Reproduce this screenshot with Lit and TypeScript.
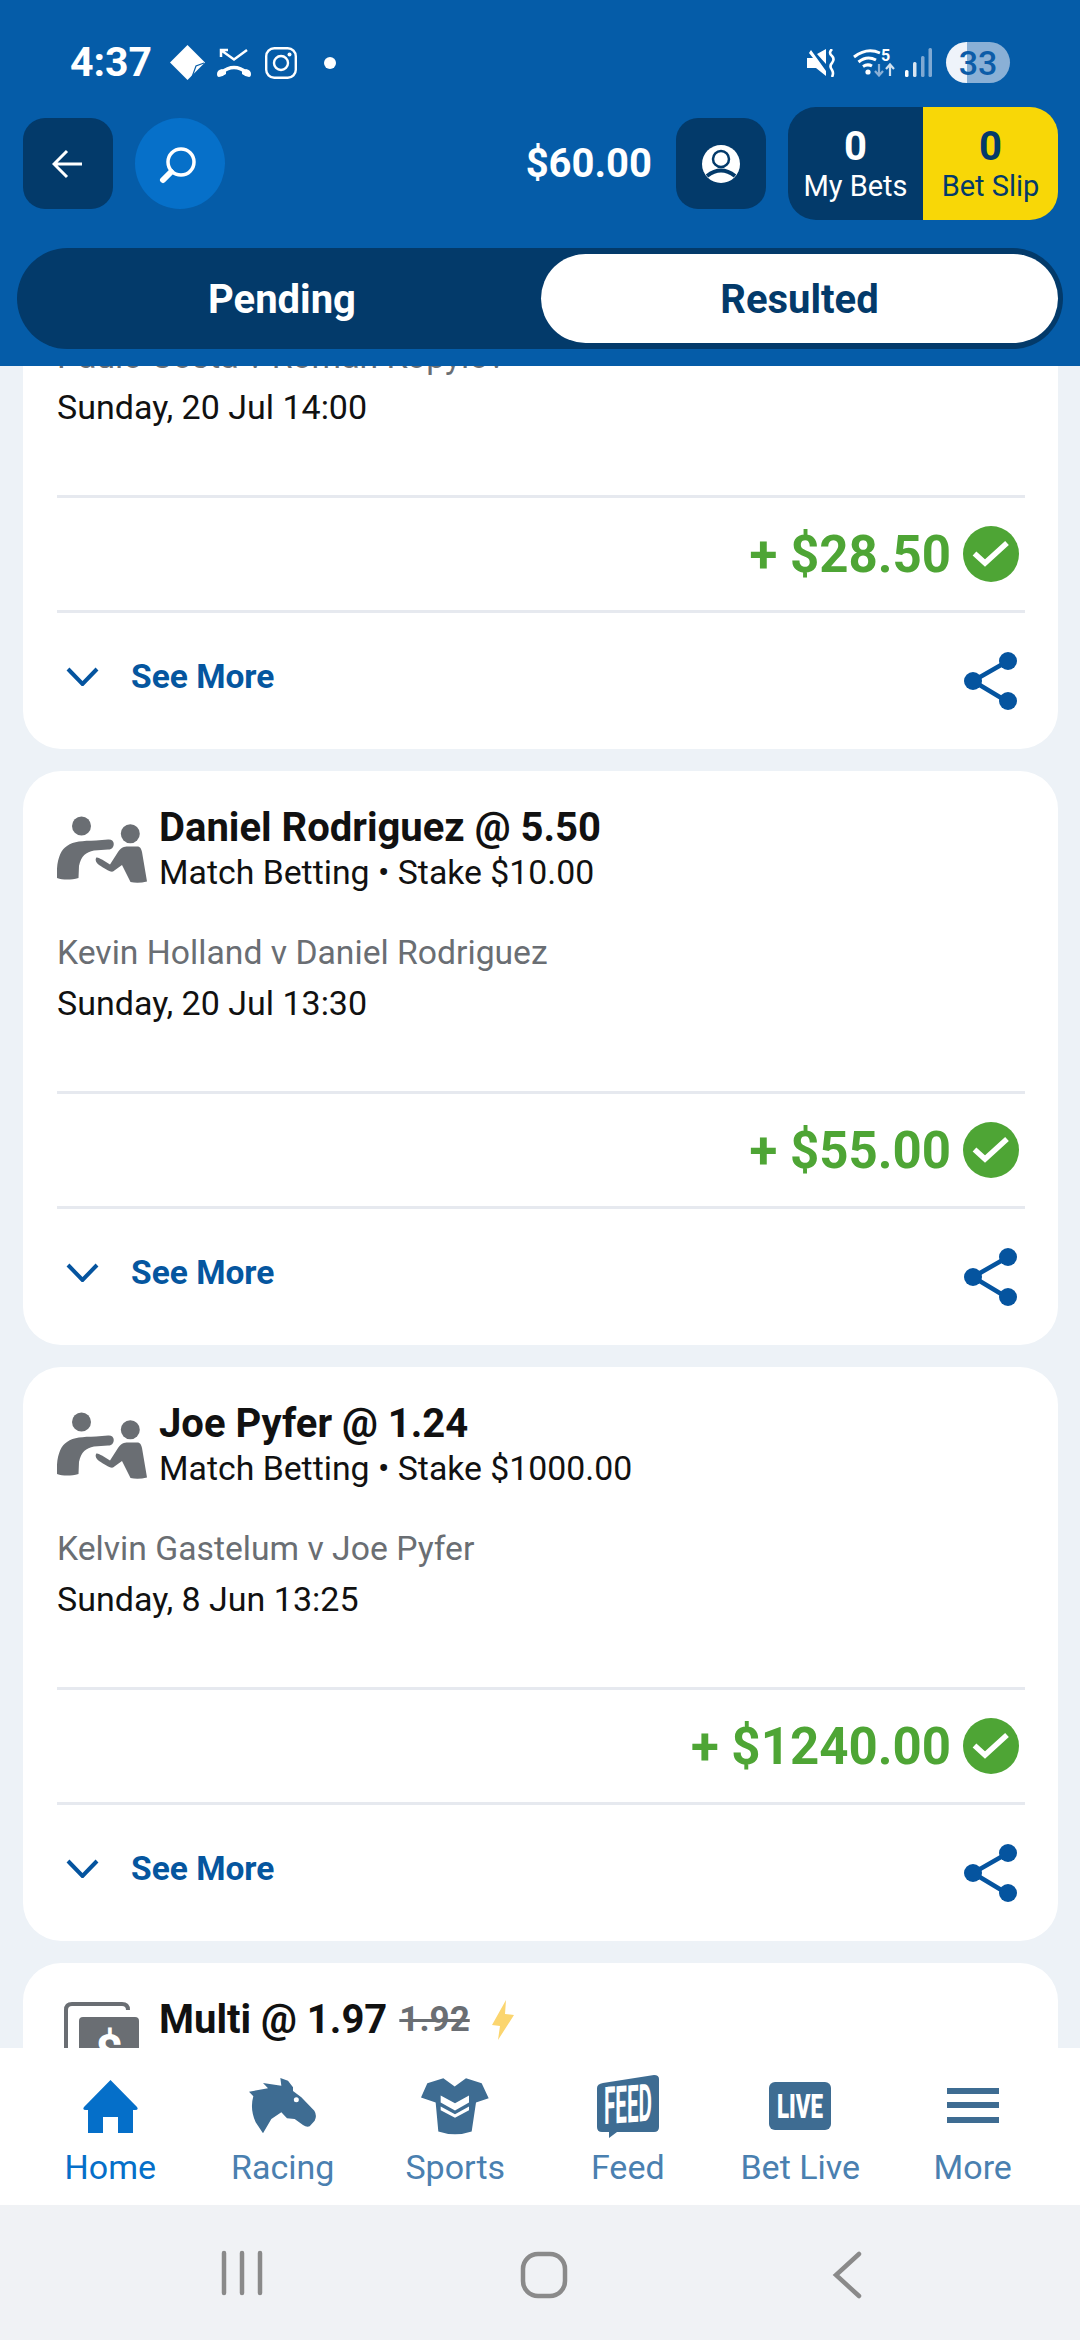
import { LitElement, html, css, svg } from "lit";
import { customElement } from "lit/decorators.js";

const fightIcon = html`<svg class="sport" viewBox="7 15 90 70">
  <circle cx="31.5" cy="26" r="9.5" fill="#6a6e73"/><circle cx="80.3" cy="33.7" r="9.5" fill="#6a6e73"/>
  <path fill="#6a6e73" d="M7 78 C6 62 10 50 17 46 C24 41 32 41 46 40.5 L58 39.500 C63 39 65 43 63 47 C62 49 60 49.500 58 49.500 L44 50.500 C36 52 31 56 29 66 L28.500 78 C21 80 13 80 7 78Z"/>
  <path fill="#6a6e73" d="M46 58 C47 56.500 50 59 52 59.500 L60 64.500 L68 52 C71 47.500 74 46.500 78 46.500 L87 46.500 C90 46.500 91 48 92 52 L97 81.500 C91 83 85 83 80.500 82 L72 65 L63 71.500 C60 72.500 54 68 49 65 C46 63 45 60 46 58Z"/>
</svg>`;

const multiIcon = html`<svg class="sport multi" viewBox="0 0 75 70">
  <path d="M2 62 V8 Q2 2 8 2 H58 Q64 2 64 8" fill="none" stroke="#6a6e73" stroke-width="4"/>
  <path d="M15 19 Q15 15 19 15 H71 Q75 15 75 19 V70 H15Z" fill="#6a6e73"/>
  <text x="45" y="66" text-anchor="middle" font-size="48" font-weight="700" fill="#fff" font-family="Roboto">$</text>
</svg>`;

const checkIcon = html`<svg class="check" viewBox="0 0 56 56"><circle cx="28" cy="28" r="28" fill="#4ea535"/><path d="M11.500 27.500 L22 37 L44 17" fill="none" stroke="#fff" stroke-width="5.500"/></svg>`;

const shareIcon = html`<svg class="share" viewBox="0 0 53 58">
  <path d="M44 9 L9 29 L44 50" fill="none" stroke="#05549f" stroke-width="4.500"/>
  <circle cx="9" cy="29" r="9" fill="#05549f"/><circle cx="44" cy="9" r="9" fill="#05549f"/><circle cx="44" cy="49" r="9" fill="#05549f"/>
</svg>`;

const chevron = html`<svg class="chev" viewBox="0 0 33 19"><path d="M2 2 L16.500 17 L31 2" fill="none" stroke="#05549f" stroke-width="4"/></svg>`;

const navIcons: Record<string, unknown> = {
  home: html`<svg class="nav-svg" style="width:55px;height:53px" viewBox="0 0 55 53"><path fill="#056fc9" d="M27.500 0 L54 27 Q56 30 52 30 L50 30 V53 H35 V37 H20 V53 H5 V30 H3 Q-1 30 1 27Z"/></svg>`,
  racing: html`<svg class="nav-svg" style="width:68px;height:56px" viewBox="58 37 204 168">
    <path fill="#3e6c92" d="M152 37 L175 45 L190 65 L190 76 L215 95 L254 135 Q263 150 255 165 L240 182 Q230 185 220 178 L195 160 L172 158 L155 140 L125 160 L100 203 L78 170 Q60 130 71 92 L58 78 L115 68 L100 52 L155 60Z"/>
    <circle cx="200" cy="102" r="7.500" fill="#fff"/></svg>`,
  sports: html`<svg class="nav-svg" style="width:68px;height:57px" viewBox="573 35 204 170">
    <path fill="#3e6c92" d="M640 35 L674 60 L708 35 L755 50 L776 95 L738 108 L725 195 Q675 212 625 195 L617 108 L573 93 L592 50Z"/>
    <path fill="#fff" d="M632 87 L675 110 L717 87 V108 L675 132 L632 108Z M632 120 L675 143 L717 120 V131 L675 154 L632 131Z"/></svg>`,
  feed: html`<svg class="nav-svg" style="width:62px;height:63px" viewBox="0 0 62 63">
    <path fill="#3e6c92" d="M6 8 L57 0 Q62 0 62 4 V52 Q62 57 57 57 L20 57 L12 63 V57 H5 Q0 57 0 52 V13 Q0 9 6 8Z"/>
    <text transform="translate(7 49) skewY(-4)" font-size="52" font-weight="700" fill="#fff" font-family="Roboto" textLength="48" lengthAdjust="spacingAndGlyphs">FEED</text></svg>`,
  live: html`<svg class="nav-svg" style="width:62px;height:48px" viewBox="0 0 62 48">
    <rect width="62" height="48" rx="6" fill="#3e6c92"/>
    <text x="8" y="36" font-size="33" font-weight="900" fill="#fff" font-family="Roboto" textLength="46" lengthAdjust="spacingAndGlyphs">LIVE</text></svg>`,
  more: html`<svg class="nav-svg" style="width:52px;height:36px" viewBox="0 0 52 36"><path fill="#3e6c92" d="M0 0 H52 V6 H0Z M0 14 H52 V20 H0Z M0 29 H52 V35 H0Z"/></svg>`,
};

interface Bet { title?: string; sub?: string; ev: string; date: string; amount: string }

const bets: Bet[] = [
  { ev: "Paulo Costa v Roman Kopylov", date: "Sunday, 20 Jul 14:00", amount: "+ $28.50" },
  { title: "Daniel Rodriguez @ 5.50", sub: "Match Betting • Stake $10.00", ev: "Kevin Holland v Daniel Rodriguez", date: "Sunday, 20 Jul 13:30", amount: "+ $55.00" },
  { title: "Joe Pyfer @ 1.24", sub: "Match Betting • Stake $1000.00", ev: "Kelvin Gastelum v Joe Pyfer", date: "Sunday, 8 Jun 13:25", amount: "+ $1240.00" },
];

const navItems = [
  { key: "home", label: "Home", active: true },
  { key: "racing", label: "Racing" },
  { key: "sports", label: "Sports" },
  { key: "feed", label: "Feed" },
  { key: "live", label: "Bet Live" },
  { key: "more", label: "More" },
];

@customElement("app-root")
export class AppRoot extends LitElement {
  static styles = css`
    :host { display: block; width: 1080px; height: 2340px; font-family: Roboto, sans-serif; background: #edf2f7; }
    * { box-sizing: border-box; }
    svg { display: block; flex: none; }
    .page { display: flex; flex-direction: column; height: 2340px; }

    .header { flex: none; height: 366px; background: #055ca8; padding-top: 42px; display: flex; flex-direction: column; }
    .status { height: 41px; padding: 0 70px; display: flex; align-items: center; color: #fff; }
    .time { font-size: 41px; font-weight: 700; line-height: 41px; width: 81px; margin-right: 19px; white-space: nowrap; }
    .gap12 { margin-left: 12px; } .gap14 { margin-left: 14px; } .gap10 { margin-left: 10px; } .gap17 { margin-left: 17px; }
    .sdot { width: 12px; height: 12px; border-radius: 50%; background: #fff; margin-left: 27px; }
    .grow { flex: 1; }
    .batt { width: 64px; height: 41px; border-radius: 21px; margin-left: 14px; display: flex; align-items: center; justify-content: center; font-size: 34px; font-weight: 500; color: #0c5ca8; background: linear-gradient(90deg, #eef3fa 33%, #8ab0d6 33%); }

    .toolbar { margin-top: 24px; height: 113px; padding: 0 22px 0 23px; display: flex; align-items: center; }
    .sq { width: 90px; height: 91px; border-radius: 22px; background: #033a6a; display: flex; align-items: center; justify-content: center; }
    .round { width: 90px; height: 91px; border-radius: 50%; background: #0670c9; margin-left: 22px; display: flex; align-items: center; justify-content: center; }
    .money { font-size: 40px; font-weight: 700; color: #fff; margin-right: 24px; }
    .betbox { width: 270px; height: 113px; margin-left: 22px; border-radius: 28px; overflow: hidden; display: flex; }
    .cell { flex: 1; display: flex; flex-direction: column; align-items: center; padding-top: 19px; background: #033a6a; color: #fff; }
    .cell.slip { background: #f8d707; color: #033a6a; }
    .cell b { font-size: 40px; line-height: 42px; font-weight: 700; }
    .cell span { font-size: 29px; line-height: 36px; }

    .tabs { margin: 28px 17px 0; height: 101px; border-radius: 51px; background: #033a6a; padding: 6px 5px 6px 6px; display: flex; align-items: center; }
    .tab { flex: 1; text-align: center; font-size: 40px; font-weight: 700; line-height: 91px; height: 89px; color: #fff; }
    .tab.on { flex: none; width: 517px; border-radius: 45px; background: #fff; color: #033a6a; }

    .scroll { flex: 1; min-height: 0; overflow: hidden; }
    .list { margin-top: -191px; padding: 0 22px 0 23px; display: flex; flex-direction: column; gap: 22px; }
    .card { height: 574px; flex: none; background: #fff; border-radius: 38px; padding: 33px 33px 0 34px; display: flex; flex-direction: column; }
    .head { display: flex; height: 93px; }
    .sport { width: 90px; height: 70px; margin-top: 11px; margin-right: 12px; }
    .multi { width: 75px; margin-top: 6px; margin-left: 7px; margin-right: 20px; }
    .title { font-size: 40px; font-weight: 700; line-height: 46px; padding-top: 1px; margin-bottom: -1px; color: #111; white-space: nowrap; display: flex; align-items: center; }
    .strike { color: #6a6e73; text-decoration: line-through; font-size: 35px; margin-left: 12px; }
    .bolt { width: 22px; height: 40px; margin-left: 22px; }
    .sub { font-size: 33.800px; line-height: 46px; color: #111; white-space: nowrap; }
    .ev { margin-top: 30px; font-size: 33.700px; line-height: 51px; color: #6a6e73; }
    .date { font-size: 34px; line-height: 50px; color: #111; }
    .line { height: 3px; background: #e6e9ef; flex: none; }
    .spacer { height: 63px; flex: none; }
    .amount-row { height: 112px; display: flex; align-items: center; justify-content: flex-end; padding-right: 6px; }
    .amount { font-size: 51px; font-weight: 700; color: #4ea535; margin-right: 12px; }
    .check { width: 56px; height: 56px; }
    .foot { height: 136px; display: flex; align-items: center; justify-content: space-between; padding: 0 8px 0 9px; }
    .more { display: flex; align-items: center; gap: 32px; font-size: 33.500px; font-weight: 700; color: #05569f; margin-bottom: 9px; }
    .chev { width: 33px; height: 19px; }
    .share { width: 53px; height: 58px; }

    .nav { flex: none; height: 157px; background: #fff; padding: 0 21px 0 24px; display: grid; grid-template-columns: repeat(6, 1fr); }
    .item { position: relative; display: flex; flex-direction: column; align-items: center; }
    .icon-slot { height: 98px; display: flex; align-items: center; justify-content: center; padding-top: 18px; }
    .label { font-size: 34px; line-height: 40px; margin-top: 1px; color: #4a80b0; }
    .item.on .label { color: #056fc9; }

    .sys { flex: none; height: 135px; background: #f0f2f5; position: relative; }
    .sys svg { position: absolute; left: 0; top: 0; width: 1080px; height: 135px; }
  `;

  private card(b: Bet) {
    return html`<div class="card">
      <div class="head">${fightIcon}
        <div><div class="title">${b.title}</div><div class="sub">${b.sub}</div></div>
      </div>
      <div class="ev">${b.ev}</div>
      <div class="date">${b.date}</div>
      <div class="spacer"></div>
      <div class="line"></div>
      <div class="amount-row"><span class="amount">${b.amount}</span>${checkIcon}</div>
      <div class="line"></div>
      <div class="foot"><div class="more">${chevron}See More</div>${shareIcon}</div>
    </div>`;
  }

  render() {
    return html`<div class="page">
      <div class="header">
        <div class="status">
          <span class="time">4:37</span>
          <svg width="35" height="35" viewBox="0 0 35 35"><path fill="#fff" d="M17.500 0 L35 17.500 L17.500 35 L0 17.500Z"/><path d="M22 32 L26 21 L34 18" fill="none" stroke="#055ca8" stroke-width="1.200"/></svg>
          <svg class="gap12" width="34" height="29" viewBox="0 0 34 29"><path d="M4 9 V2 H11 M4.500 2.500 L17 11.500 L30 2" fill="none" stroke="#fff" stroke-width="2.500"/><path d="M4 25 Q17 14 30 25" fill="none" stroke="#fff" stroke-width="3.500"/><path d="M0 26 Q0 22 5 21 L9 23 V26 Q5 29 2 29 Q0 29 0 26Z M34 26 Q34 22 29 21 L25 23 V26 Q29 29 32 29 Q34 29 34 26Z" fill="#fff"/></svg>
          <svg class="gap14" width="32" height="32" viewBox="0 0 32 32"><rect x="1.200" y="1.200" width="29.600" height="29.600" rx="8" fill="none" stroke="#fff" stroke-width="2.400"/><circle cx="16" cy="16" r="7" fill="none" stroke="#fff" stroke-width="2.400"/><circle cx="24.500" cy="7.500" r="2" fill="#fff"/></svg>
          <span class="sdot"></span>
          <span class="grow"></span>
          <svg width="29" height="28" viewBox="0 0 29 28"><path fill="#fff" d="M0 9 H6 L2 4 L4 1 L19 22 V27 L9 19 H0Z M10 5 L19 0 V15Z"/><path d="M25 0 Q21 4 25 7 Q28 10 25 14 Q22 17 25 21 Q27 24 25 28" fill="none" stroke="#fff" stroke-width="2.600"/></svg>
          <svg class="gap17" width="42" height="29" viewBox="0 0 42 29">
            <path d="M1 9 Q14 -1 27 5 M5.500 14 Q14 7 23 12 M10 18.500 Q14.500 15.500 19 18" fill="none" stroke="#fff" stroke-width="3"/><circle cx="15" cy="24" r="2.600" fill="#fff"/>
            <text x="28" y="13" font-size="16" font-weight="700" fill="#fff" font-family="Roboto">5</text>
            <path d="M26 16 V27 M22 23 L26 27.500 L30 23" fill="none" stroke="#8ab0d6" stroke-width="2.200"/>
            <path d="M37 28 V17 M33 21 L37 16.500 L41 21" fill="none" stroke="#cfe0ef" stroke-width="2.200"/>
          </svg>
          <svg class="gap10" width="27" height="29" viewBox="0 0 27 29"><rect x="0" y="22" width="3.500" height="7" rx="1.500" fill="#fff"/><rect x="8" y="14" width="3.500" height="15" rx="1.500" fill="#d8e5f1"/><rect x="16" y="8" width="3.500" height="21" rx="1.500" fill="#7fa9d3"/><rect x="23.500" y="0" width="3.500" height="29" rx="1.500" fill="#7fa9d3"/></svg>
          <span class="batt">33</span>
        </div>
        <div class="toolbar">
          <div class="sq"><svg width="32" height="32" viewBox="0 0 32 32"><path d="M30 16 H3 M15 3 L2 16 L15 29" fill="none" stroke="#fff" stroke-width="3"/></svg></div>
          <div class="round"><svg width="42" height="42" viewBox="0 0 42 42"><circle cx="22" cy="19" r="13" fill="none" stroke="#fff" stroke-width="3.500"/><path d="M12 29 L4 37" stroke="#fff" stroke-width="6" stroke-linecap="round"/></svg></div>
          <span class="grow"></span>
          <span class="money">$60.00</span>
          <div class="sq"><svg width="38" height="38" viewBox="-19 -19 38 38"><circle r="19" fill="#fff"/><circle cy="-5" r="8" fill="#fff" stroke="#033a6a" stroke-width="2.500"/><path d="M-14 12 Q0 1 14 12" fill="none" stroke="#033a6a" stroke-width="4"/></svg></div>
          <div class="betbox">
            <div class="cell"><b>0</b><span>My Bets</span></div>
            <div class="cell slip"><b>0</b><span>Bet Slip</span></div>
          </div>
        </div>
        <div class="tabs"><div class="tab">Pending</div><div class="tab on">Resulted</div></div>
      </div>

      <div class="scroll"><div class="list">
        ${bets.map((b) => this.card(b))}
        <div class="card">
          <div class="head">${multiIcon}
            <div><div class="title">Multi @ 1.97 <span class="strike">1.92</span>
              <svg class="bolt" viewBox="0 0 22 40"><path fill="#fbd56f" d="M14 0 L0 25 L8 26 L6 40 L22 15 L13 14Z"/></svg></div></div>
          </div>
        </div>
      </div></div>

      <div class="nav">
        ${navItems.map((n) => html`<div class="item ${n.active ? "on" : ""}">
          <div class="icon-slot">${navIcons[n.key]}</div>
          <div class="label">${n.label}</div>
        </div>`)}
      </div>

      <div class="sys"><svg viewBox="0 0 1080 135">
        ${svg`<g fill="none" stroke="#8a8a8a" stroke-width="4.500" stroke-linecap="round">
          <path d="M224 48 V88 M242 48 V88 M260 48 V88"/>
          <rect x="523" y="49" width="42" height="42" rx="15"/>
          <path d="M859 49 L836 70 L859 91"/>
        </g>`}
      </svg></div>
    </div>`;
  }
}
